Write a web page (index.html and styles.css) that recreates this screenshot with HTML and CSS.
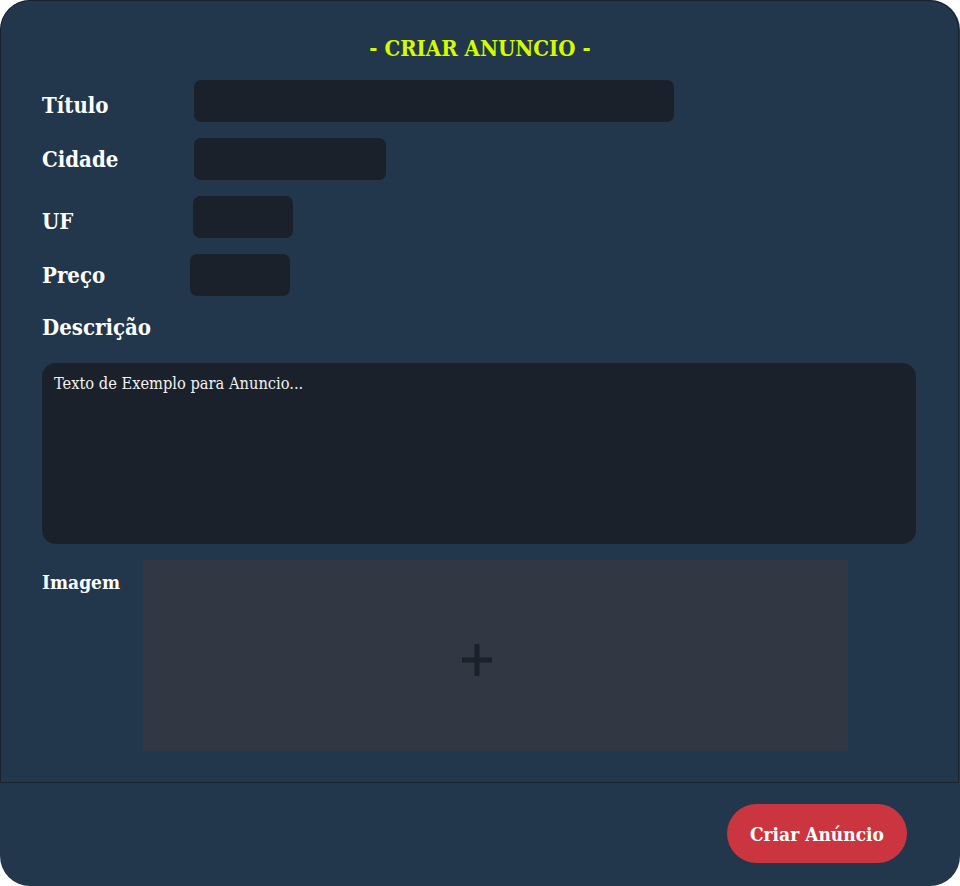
FILE: index.html
```html
<!DOCTYPE html>
<html lang="pt-BR">
<head>
<meta charset="utf-8">
<title>Criar Anúncio</title>
<link rel="stylesheet" href="styles.css">
</head>
<body>
<div class="modal">
  <form class="form">
    <h1 class="title">- CRIAR ANUNCIO -</h1>
    <div class="fields">
      <div class="row">
        <label class="label label-low">Título</label>
        <div class="input input-titulo"></div>
      </div>
      <div class="row">
        <label class="label">Cidade</label>
        <div class="input input-cidade"></div>
      </div>
      <div class="row">
        <label class="label label-low">UF</label>
        <div class="input input-uf"></div>
      </div>
      <div class="row">
        <label class="label">Preço</label>
        <div class="input input-preco"></div>
      </div>
    </div>
    <div class="label desc-label">Descrição</div>
    <div class="textarea">Texto de Exemplo para Anuncio...</div>
    <div class="image-row">
      <div class="image-label">Imagem</div>
      <div class="image-box">
        <svg class="plus" width="30" height="32" viewBox="0 0 30 32">
          <rect x="12.5" y="0" width="5" height="32" fill="#1b212b"/>
          <rect x="0" y="13.5" width="30" height="5" fill="#1b212b"/>
        </svg>
      </div>
    </div>
  </form>
  <div class="footer">
    <button class="btn" type="button">Criar Anúncio</button>
  </div>
</div>
</body>
</html>
```
FILE: styles.css
```css
html, body {
  margin: 0;
  padding: 0;
  background: #ffffff;
}
body {
  font-family: "DejaVu Serif", "Liberation Serif", serif;
  color: #ffffff;
}
.modal {
  width: 960px;
  height: 886px;
  background: #22374c;
  border-radius: 30px;
  overflow: hidden;
  display: flex;
  flex-direction: column;
  box-sizing: border-box;
}
.form {
  width: 959px;
  height: 783px;
  box-sizing: border-box;
  border: 1px solid #1a222c;
  border-top-left-radius: 30px;
  border-top-right-radius: 30px;
  padding: 27px 42px 0 41px;
  display: flex;
  flex-direction: column;
}
.title {
  margin: 0;
  text-align: center;
  font-size: 22px;
  line-height: 40px;
  font-weight: bold;
  font-stretch: condensed;
  color: #d4fb00;
  padding-left: 2px;
}
.fields {
  margin-top: 12px;
  display: flex;
  flex-direction: column;
  gap: 16px;
}
.row {
  display: flex;
  align-items: center;
  height: 42px;
}
.label {
  font-size: 22px;
  font-weight: bold;
  font-stretch: condensed;
  line-height: 28px;
  width: 152px;
  flex: none;
}
.label-low {
  padding-top: 8px;
}
.input {
  height: 42px;
  background: #1b212b;
  border-radius: 7px;
}
.input-titulo { width: 480px; }
.input-cidade { width: 192px; }
.input-uf { width: 100px; margin-left: -1px; }
.input-preco { width: 100px; margin-left: -4px; }
.desc-label {
  margin-top: 17px;
}
.textarea {
  margin-top: 22px;
  height: 181px;
  box-sizing: border-box;
  background: #1b212b;
  border-radius: 14px;
  padding: 10px 12px;
  font-size: 16.3px;
  font-stretch: condensed;
  line-height: 22px;
  color: #f2f2f2;
}
.image-row {
  margin-top: 16px;
  display: flex;
  align-items: flex-start;
}
.image-label {
  width: 101px;
  flex: none;
  font-size: 19px;
  font-weight: bold;
  font-stretch: condensed;
  line-height: 24px;
  padding-top: 10px;
}
.image-box {
  width: 705px;
  height: 191px;
  background: #313843;
  display: flex;
  align-items: center;
  justify-content: center;
}
.plus {
  margin-right: 38px;
  margin-top: 8px;
}
.footer {
  flex: 1;
  display: flex;
  align-items: center;
  justify-content: flex-end;
  padding-right: 53px;
}
.btn {
  width: 180px;
  height: 59px;
  border: none;
  border-radius: 30px;
  background: #cb353f;
  color: #ffffff;
  font-family: "DejaVu Serif", "Liberation Serif", serif;
  font-size: 19px;
  font-weight: bold;
  font-stretch: condensed;
  padding: 0;
  margin-top: -2px;
}
```
